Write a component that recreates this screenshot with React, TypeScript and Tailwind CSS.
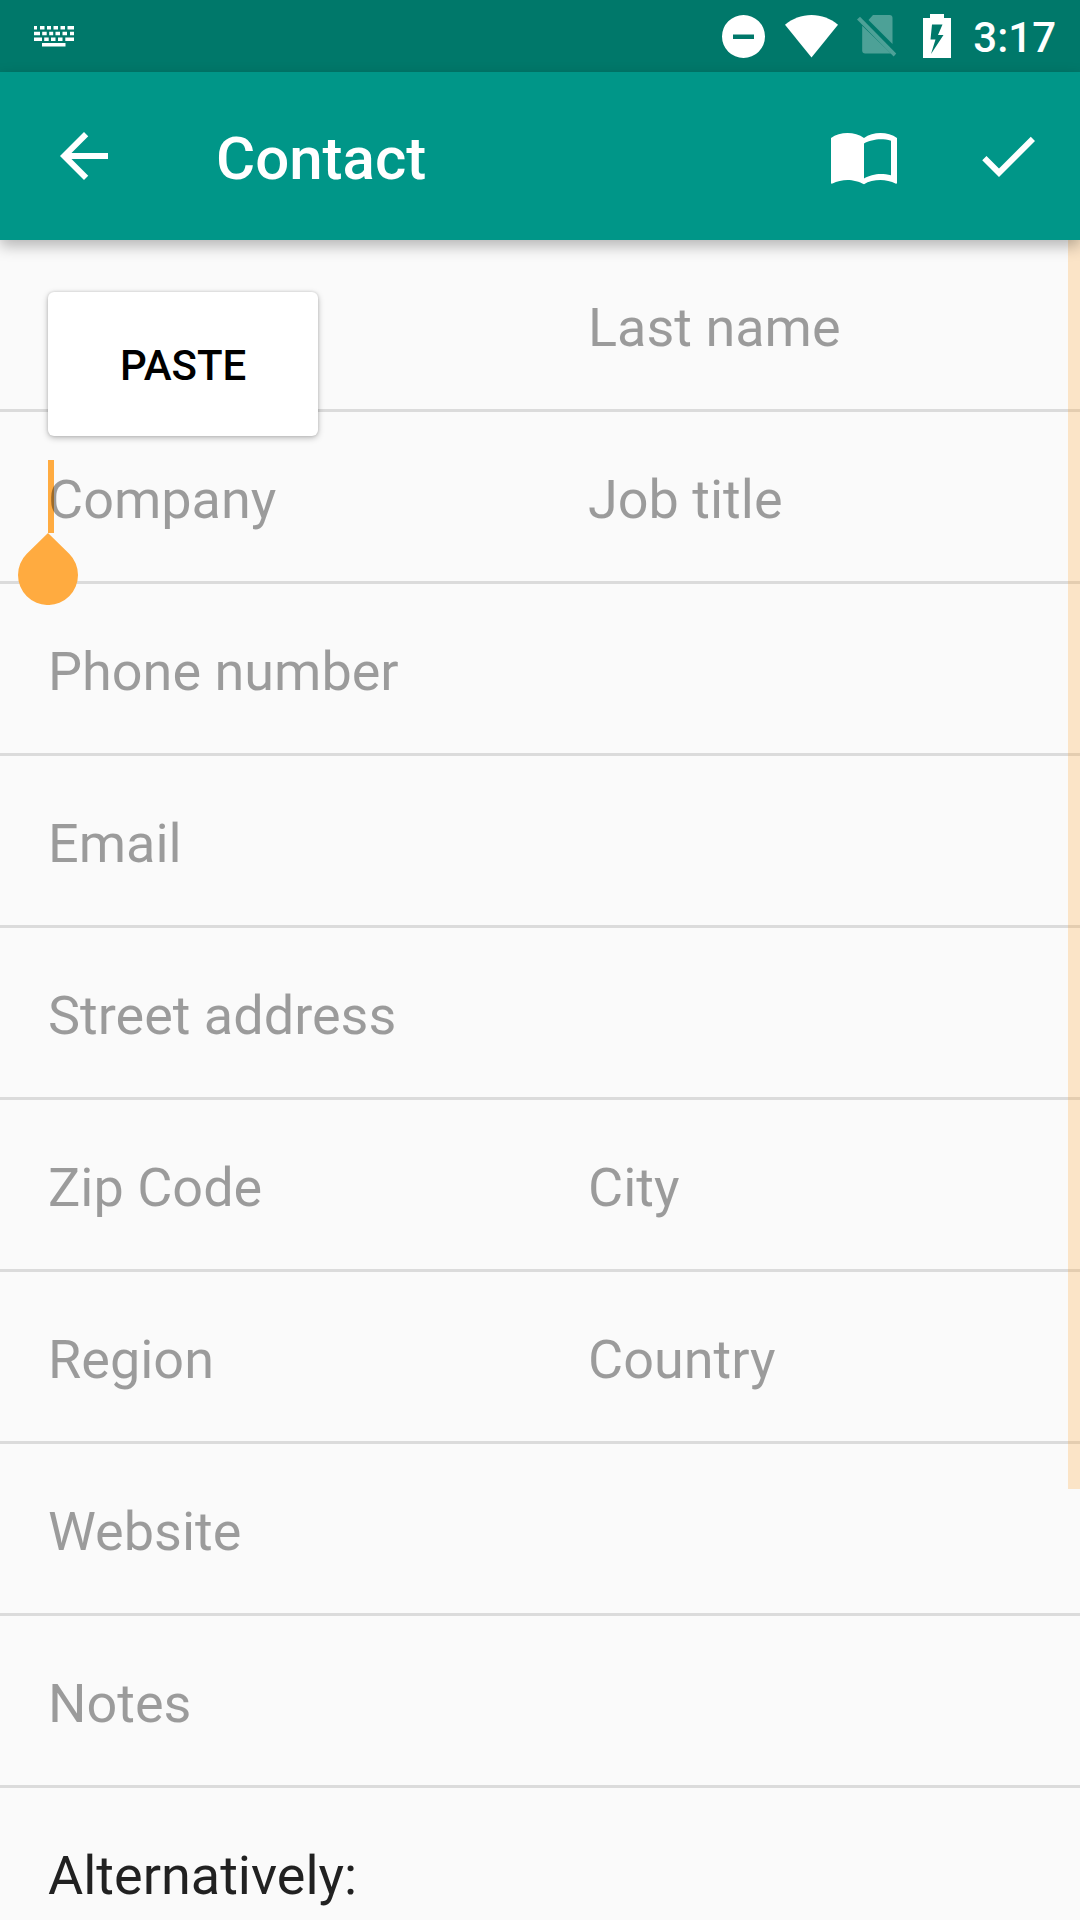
import React from "react";

type Field = { id: string; label: string; hint?: string; type?: string };

const rows: Field[][] = [
  [
    { id: "first-name", label: "First name", hint: "" },
    { id: "last-name", label: "Last name" },
  ],
  [
    { id: "company", label: "Company" },
    { id: "job-title", label: "Job title" },
  ],
  [{ id: "phone", label: "Phone number", type: "tel" }],
  [{ id: "email", label: "Email", type: "email" }],
  [{ id: "street", label: "Street address" }],
  [
    { id: "zip", label: "Zip Code" },
    { id: "city", label: "City" },
  ],
  [
    { id: "region", label: "Region" },
    { id: "country", label: "Country" },
  ],
  [{ id: "website", label: "Website", type: "url" }],
  [{ id: "notes", label: "Notes" }],
];

function KeyboardIcon() {
  return (
    <svg width="42" height="24" viewBox="0 0 42 24" fill="currentColor" aria-hidden="true">
      <path d="M1 2h3v3.500H1zM7 2h4.500v3.500H7zM14 2h4v3.500h-4zM20.500 2h4.500v3.500h-4.500zM27.500 2h4.500v3.500h-4.500zM34.500 2h6.500v3.500h-6.500z" />
      <path d="M1 7.700h6v3.500H1zM9.200 7.700h4.500v3.500H9.200zM16.200 7.700h4v3.500h-4zM22.500 7.700h4.500v3.500h-4.500zM29.500 7.700h4.500v3.500h-4.500zM37 7.700h4v3.500h-4z" />
      <path d="M1 13.400h8v3.500H1zM11.200 13.400h4.500v3.500h-4.500zM18 13.400h4.500v3.500H18zM25 13.400h4.500v3.500H25zM32.300 13.400H41v3.500h-8.700z" />
      <path d="M9 19h23.500v3.500H9z" />
    </svg>
  );
}

function DoNotDisturbIcon() {
  return (
    <svg width="43" height="43" viewBox="0 0 43 43" fill="currentColor" aria-hidden="true">
      <path fillRule="evenodd" d="M21.500 0a21.500 21.500 0 1 0 0 43 21.500 21.500 0 0 0 0-43zM11 19.500h21v4.500H11z" />
    </svg>
  );
}

function WifiIcon() {
  return (
    <svg width="53" height="43" viewBox="0 0 53 43" fill="currentColor" aria-hidden="true">
      <path d="M26.500 42.500 0 9.700C7.500 3.500 16.500 0 26.500 0S45.500 3.500 53 9.700z" />
    </svg>
  );
}

function NoSimIcon() {
  return (
    <svg width="40" height="42" viewBox="0 0 40 42" fill="currentColor" className="opacity-30" aria-hidden="true">
      <path d="M16 0h16.500a3 3 0 0 1 3 3v26L11.500 5z" />
      <path d="M5.200 10.800 34 38.500H8.200a3 3 0 0 1-3-3z" />
      <path d="M3 1.800 39.200 38.500 36.700 41.500 0 4.500z" />
    </svg>
  );
}

function BatteryIcon() {
  return (
    <svg width="28" height="44" viewBox="0 0 28 44" fill="currentColor" aria-hidden="true">
      <path fillRule="evenodd" d="M7 0h14v4h7v40H0V4h7zM9 10.500 7.500 25.500h5L8 40 20.500 21h-5.500L19.500 10.500z" />
    </svg>
  );
}

function BackIcon() {
  return (
    <svg width="72" height="72" viewBox="0 0 24 24" fill="currentColor" aria-hidden="true">
      <path d="M20 11H7.830l5.590-5.590L12 4l-8 8 8 8 1.410-1.410L7.830 13H20z" />
    </svg>
  );
}

function BookIcon() {
  return (
    <svg width="72" height="72" viewBox="0 0 24 24" fill="currentColor" aria-hidden="true">
      <path
        fillRule="evenodd"
        d="M1 6C2.450 4.850 4.550 4.350 6.500 4.350S10.550 4.850 12 6c1.450-1.150 3.550-1.650 5.500-1.650S21.550 4.850 23 6v14.900c0 .3-.3.450-.5.300C21.100 20.400 19.150 20 17.500 20c-1.950 0-4.050.4-5.500 1.450C10.650 20.550 8.200 20 6.500 20c-1.650 0-3.600.4-5 1.200-.25.150-.5-.050-.5-.300zM12 7.800v11.700c1.350-.85 3.800-1.500 5.500-1.500 1.200 0 2.400.1 3.500.45V6.900c-1.100-.35-2.300-.5-3.500-.5-1.700 0-4.150.55-5.500 1.400z"
      />
    </svg>
  );
}

function CheckIcon() {
  return (
    <svg width="72" height="72" viewBox="0 0 24 24" fill="currentColor" aria-hidden="true">
      <path d="M9 16.170 4.830 12l-1.420 1.410L9 19 21 7l-1.410-1.410z" />
    </svg>
  );
}

function CursorHandle() {
  return (
    <svg width="60" height="72" viewBox="0 0 60 72" fill="#ffab40" aria-hidden="true">
      <path d="M30 0 51.200 20.800A30 30 0 1 1 8.800 20.800z" />
    </svg>
  );
}

function TextField({ id, label, hint, type }: Field) {
  return (
    <div className="relative min-w-0 px-12">
      {id === "company" && <span className="absolute left-12 top-12 h-[73px] w-1.5 bg-[#ffab40]" />}
      <input
        id={id}
        type={type ?? "text"}
        aria-label={label}
        placeholder={hint ?? label}
        className="relative block h-[169px] w-full bg-transparent pt-1.5 text-[54px] text-black/87 outline-none placeholder:text-black/38"
      />
      {id === "company" && (
        <>
          <button
            type="button"
            className="absolute -top-[120px] left-12 z-10 flex h-36 items-center rounded-md bg-white px-18 pt-0.5 text-[42px] font-medium text-black shadow-[0_2px_6px_rgba(0,0,0,0.25),0_0_3px_rgba(0,0,0,0.15)]"
          >
            PASTE
          </button>
          <span className="absolute left-[18px] top-[121px] z-10">
            <CursorHandle />
          </span>
        </>
      )}
    </div>
  );
}

export default function App() {
  return (
    <div className="flex h-screen flex-col overflow-hidden bg-[#fafafa] font-[Roboto,sans-serif]">
      <div className="flex h-18 shrink-0 items-center justify-between bg-[#00786a] pl-[33px] pr-6 text-white">
        <KeyboardIcon />
        <div className="flex items-center">
          <DoNotDisturbIcon />
          <span className="ml-5"><WifiIcon /></span>
          <span className="ml-[19px]"><NoSimIcon /></span>
          <span className="ml-[26px]"><BatteryIcon /></span>
          <time className="ml-[22px] pt-1 text-[42px] font-medium leading-[68px]">3:17</time>
        </div>
      </div>

      <header className="relative z-20 flex h-42 shrink-0 items-center bg-[#009688] px-9 text-white shadow-[0_6px_14px_rgba(0,0,0,0.28)]">
        <button type="button" aria-label="Back" className="ml-3">
          <BackIcon />
        </button>
        <h1 className="ml-24 flex-1 pt-1.5 text-[60px] font-medium">Contact</h1>
        <button type="button" aria-label="Choose contact">
          <BookIcon />
        </button>
        <button type="button" aria-label="Save" className="ml-18">
          <CheckIcon />
        </button>
      </header>

      <main className="relative min-h-0 flex-1 overflow-hidden">
        <form>
          {rows.map((fields) => (
            <div
              key={fields[0].id}
              className={
                fields.length === 2
                  ? "grid grid-cols-2 border-b-3 border-black/12"
                  : "grid grid-cols-1 border-b-3 border-black/12"
              }
            >
              {fields.map((field) => (
                <TextField key={field.id} {...field} />
              ))}
            </div>
          ))}
          <p className="flex h-[169px] items-center px-12 pt-1.5 text-[54px] text-black/87">Alternatively:</p>
        </form>
        <div className="absolute right-0 top-0 h-[1249px] w-3 bg-[#ffab40]/27" />
      </main>
    </div>
  );
}
